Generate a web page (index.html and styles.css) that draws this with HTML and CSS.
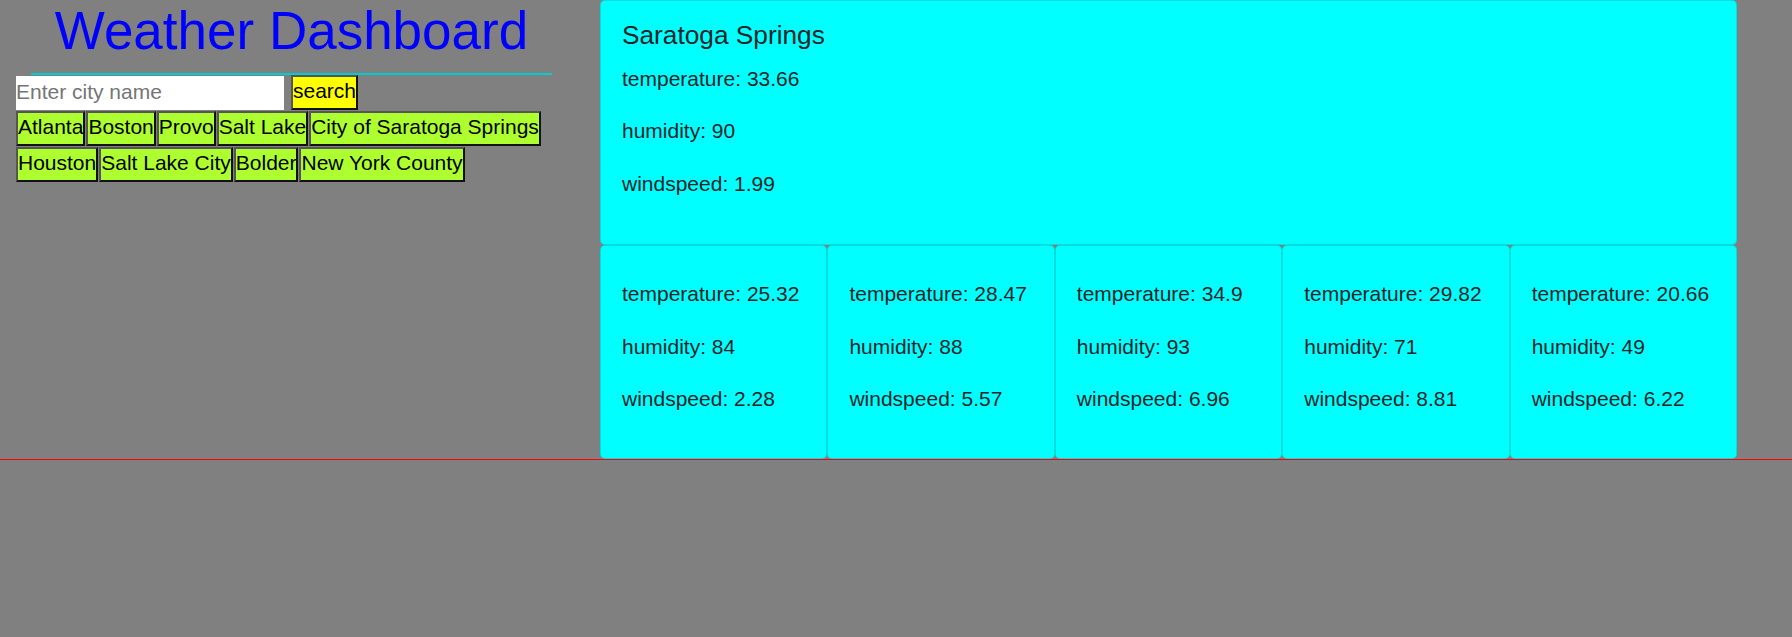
FILE: index.html
```html
<!DOCTYPE html>
<html lang="en">
<head>
<meta charset="utf-8">
<title>Weather Dashboard</title>
<link rel="stylesheet" href="styles.css">
</head>
<body>
<div class="page">
  <section class="sidebar">
    <h1 class="title">Weather Dashboard</h1>
    <hr class="rule">
    <div class="search-row">
      <input class="city-input" type="text" placeholder="Enter city name">
      <button class="btn search-btn">search</button>
    </div>
    <div class="history">
      <button class="btn city-btn">Atlanta</button>
      <button class="btn city-btn">Boston</button>
      <button class="btn city-btn">Provo</button>
      <button class="btn city-btn">Salt Lake</button>
      <button class="btn city-btn">City of Saratoga Springs</button>
      <button class="btn city-btn">Houston</button>
      <button class="btn city-btn">Salt Lake City</button>
      <button class="btn city-btn">Bolder</button>
      <button class="btn city-btn">New York County</button>
    </div>
  </section>
  <section class="forecast">
    <div class="card current">
      <h5 class="card-title">Saratoga Springs</h5>
      <p>temperature: 33.66</p>
      <p>humidity: 90</p>
      <p>windspeed: 1.99</p>
    </div>
    <div class="days">
      <div class="card day">
        <h5 class="card-title"></h5>
        <p>temperature: 25.32</p>
        <p>humidity: 84</p>
        <p>windspeed: 2.28</p>
      </div>
      <div class="card day">
        <h5 class="card-title"></h5>
        <p>temperature: 28.47</p>
        <p>humidity: 88</p>
        <p>windspeed: 5.57</p>
      </div>
      <div class="card day">
        <h5 class="card-title"></h5>
        <p>temperature: 34.9</p>
        <p>humidity: 93</p>
        <p>windspeed: 6.96</p>
      </div>
      <div class="card day">
        <h5 class="card-title"></h5>
        <p>temperature: 29.82</p>
        <p>humidity: 71</p>
        <p>windspeed: 8.81</p>
      </div>
      <div class="card day">
        <h5 class="card-title"></h5>
        <p>temperature: 20.66</p>
        <p>humidity: 49</p>
        <p>windspeed: 6.22</p>
      </div>
    </div>
  </section>
</div>
</body>
</html>
```
FILE: styles.css
```css
* {
  box-sizing: border-box;
}

html,
body {
  margin: 0;
  padding: 0;
}

body {
  background: #808080;
  font-family: "Liberation Sans", Arial, sans-serif;
  color: #212529;
}

.page {
  display: flex;
  align-items: flex-start;
  border-bottom: 1px solid #ff0000;
}

.sidebar {
  flex: none;
  width: 583px;
}

.title {
  margin: 0;
  font-size: 53px;
  line-height: 61px;
  font-weight: normal;
  color: #0000ff;
  text-align: center;
}

.rule {
  width: 521px;
  height: 2px;
  margin: 12px auto 0;
  border: 0;
  background: #00cdd0;
}

.search-row {
  display: flex;
  align-items: flex-start;
  padding-left: 16px;
  height: 35px;
}

.city-input {
  width: 268px;
  height: 34px;
  margin-top: 1px;
  padding: 0 0 3px 0;
  border: 0;
  background: #ffffff;
  color: #000000;
  font: 21px "Liberation Sans", Arial, sans-serif;
  outline: none;
}

.city-input::placeholder {
  color: #757575;
}

.btn {
  height: 35px;
  padding: 0 0 3px 0;
  border: 2px solid;
  border-color: #555555 #111111 #111111 #555555;
  color: #000000;
  font: 21px "Liberation Sans", Arial, sans-serif;
  cursor: pointer;
}

.search-btn {
  margin-left: 7px;
  background: #ffff00;
}

.history {
  display: flex;
  flex-wrap: wrap;
  gap: 1px 1px;
  padding-left: 16px;
  margin-top: 1px;
}

.city-btn {
  background: #adff2f;
}

.forecast {
  flex: none;
  width: 1137px;
  margin-left: 17px;
}

.card {
  background: #00ffff;
  border: 1px solid rgba(0, 0, 0, 0.125);
  border-radius: 5px;
  padding: 19px 21px 24px;
}

.card-title {
  margin: 0 0 11px;
  font-size: 26.25px;
  line-height: 1.2;
  font-weight: normal;
}

.card p {
  margin: 0 0 21px;
  font-size: 21px;
  line-height: 31.5px;
}

.days {
  display: flex;
}

.day {
  flex: 1 1 0;
  min-width: 0;
  padding-bottom: 22px;
}

.day .card-title {
  margin-bottom: 13px;
}
```
